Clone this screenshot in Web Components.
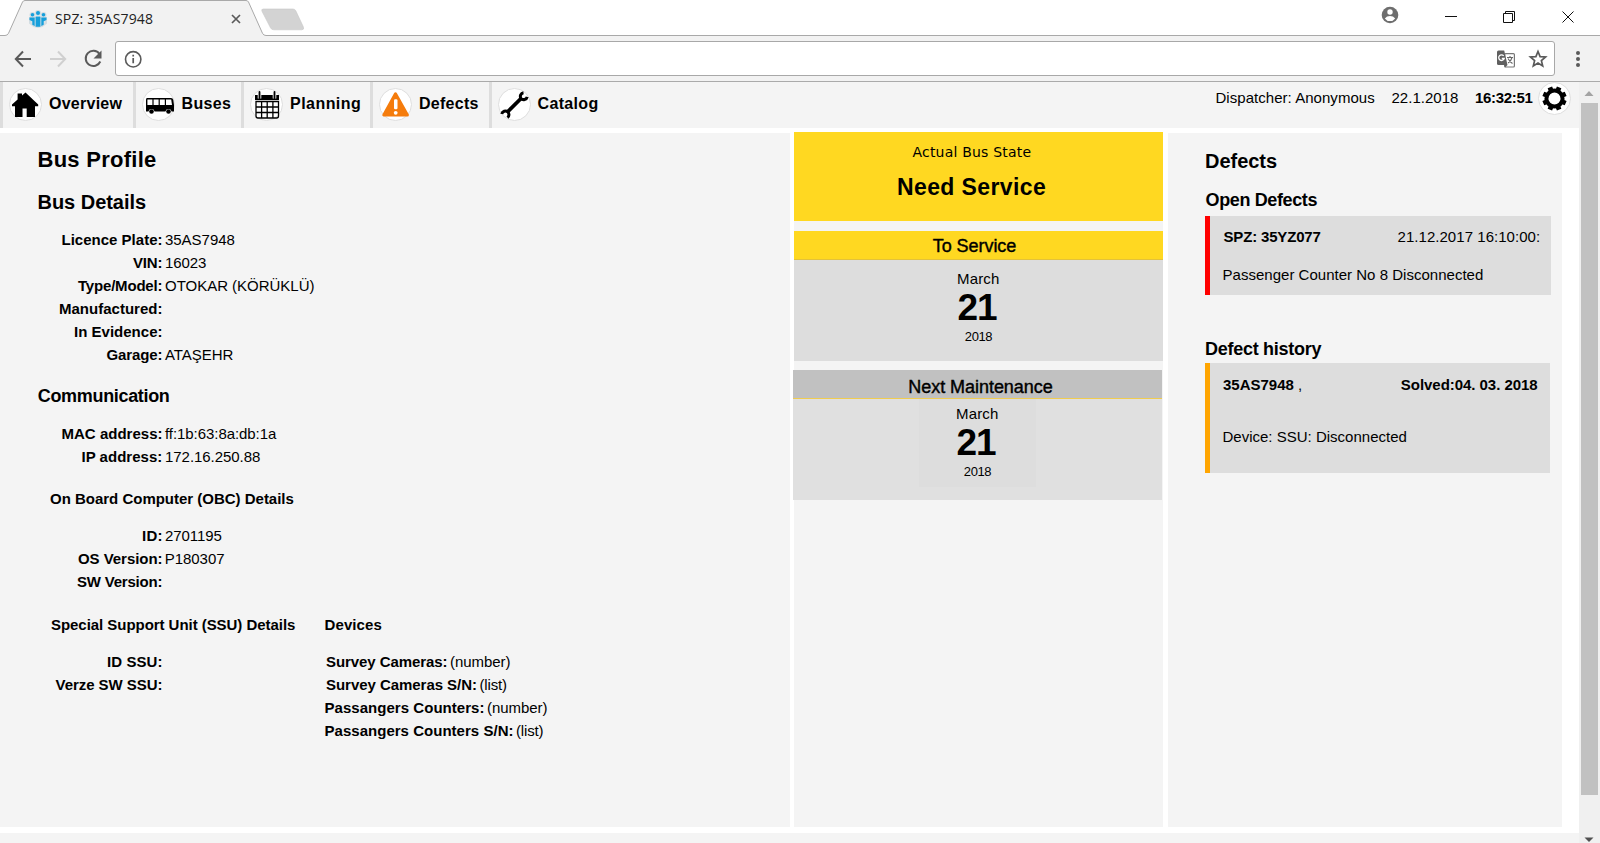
<!DOCTYPE html>
<html lang="en">
<head>
<meta charset="utf-8">
<title>SPZ: 35AS7948</title>
<style>
body{margin:0;width:1600px;height:843px;overflow:hidden;background:#fff;color:#000;font:15px/23px "Liberation Sans",Arial,sans-serif}
</style>
</head>
<body>
<bus-app></bus-app>
<script>
const define = (name, html, setup) => {
  const tpl = document.createElement('template');
  tpl.innerHTML = html;
  customElements.define(name, class extends HTMLElement {
    connectedCallback() {
      if (this.shadowRoot) return;
      const get = a => this.getAttribute(a) || '';
      this.attachShadow({mode: 'open'}).append(tpl.content.cloneNode(true));
      if (setup) setup(this, this.shadowRoot, get);
    }
  });
};

/* Text tracked so that its ink fills the width given in "w". */
const pen = document.createElement('canvas').getContext('2d');
define('fit-text', `<style>
:host{display:inline-block;white-space:pre;flex:none}
span{display:block}
</style><span><slot></slot></span>`, (el, root, get) => {
  const cs = getComputedStyle(el), text = el.textContent, span = root.querySelector('span');
  pen.font = `${cs.fontWeight} ${cs.fontSize} ${cs.fontFamily}`;
  const m = pen.measureText(text), w = parseFloat(get('w'));
  const ink = m.actualBoundingBoxLeft + m.actualBoundingBoxRight;
  el.style.width = w + 'px';
  if (text.length > 1) span.style.letterSpacing = ((w - ink) / (text.length - 1)).toFixed(3) + 'px';
  span.style.marginLeft = m.actualBoundingBoxLeft.toFixed(2) + 'px';
});

const ICONS = {
  home: '<path d="M16.500 4.500 13 7.600V5.400H8.600v6L3 16.600v1.600h3V29h7.500v-8.600h4.200V29H26V18.200h3.200v-1.600Z"/>',
  bus: '<path fill-rule="evenodd" d="M5 10h24q2 0 2.300 2l.7 5v6.500h-2.400a3.200 3.200 0 0 0-6.200 0H12.600a3.200 3.200 0 0 0-6.200 0H4V12q0-2 1-2ZM5.400 11.600V17h5v-5.400ZM11.600 11.600V17h5v-5.400ZM17.800 11.600V17h5v-5.400ZM24 11.600V17h6l-.8-5.400Z"/><circle cx="9.500" cy="23.500" r="2.300"/><circle cx="26.500" cy="23.500" r="2.300"/>',
  calendar: '<path d="M5 7h24v5H5Z"/><path d="M9.500 4.500v6M24.500 4.500v6" stroke="#f8f8f8" stroke-width="3.600"/><path d="M9.500 4v6M24.500 4v6" stroke="#000" stroke-width="1.800" stroke-linecap="round"/><path fill="none" stroke="#000" stroke-width="1.300" d="M6 13.500h22.500V28q0 2-2 2H8q-2 0-2-2ZM6 19h22.500M6 24.500h22.500M11.600 13.500V30M17.200 13.500V30M22.900 13.500V30"/>',
  warn: '<path fill="#f57c0c" stroke="#f57c0c" stroke-width="3" stroke-linejoin="round" d="M16.500 5.800 4.800 27h23.600Z"/><rect x="15" y="11.300" width="3.500" height="10" rx="1.200" fill="#fff"/><circle cx="16.700" cy="24.800" r="1.900" fill="#fff"/>',
  wrench: '<path stroke="#000" stroke-width="3.800" d="M9 24.500 23.500 10"/><path fill="none" stroke="#000" stroke-width="3" d="M25.500 4.800a3.600 3.600 0 0 0-2.500 5.600 3.600 3.600 0 0 0 6.200-1.600M9.500 29.600a3.700 3.700 0 0 0 .3-5.600 3.600 3.600 0 0 0-6 2"/>',
  gear: '<g transform="rotate(22.500 16.500 16.500)"><circle cx="16.500" cy="16.500" r="8" fill="none" stroke="#000" stroke-width="4"/><path id="t" d="M16.500 4.400v3.800M16.500 24.800v3.800M4.400 16.500h3.800M24.800 16.500h3.800" stroke="#000" stroke-width="4.800"/><path d="M16.500 4.400v3.800M16.500 24.800v3.800M4.400 16.500h3.800M24.800 16.500h3.800" stroke="#000" stroke-width="4.800" transform="rotate(45 16.500 16.500)"/></g>'
};
define('round-icon', `<style>
:host{display:block;flex:none;width:33px;height:33px}
svg{display:block}
</style><svg width="33" height="33" viewBox="0 0 33 33"><circle cx="16.500" cy="16.500" r="16" fill="#fff" stroke="#dedede"/><g></g></svg>`,
(el, root, get) => { root.querySelector('g').innerHTML = ICONS[get('name')]; });

define('nav-item', `<style>
:host{display:flex;box-sizing:border-box;height:46px;border-left:3px solid #ddd;padding:6px 0 0 var(--pad,6px);font:bold 16px/24px "Liberation Sans",Arial,sans-serif}
div{padding:4px 0 0 7px}
</style><slot name="icon"></slot><div><slot></slot></div>`);

define('info-row', `<style>
:host{display:flex;height:23px;gap:3.500px}
.l{font-weight:bold;display:flex;justify-content:flex-end;width:var(--label,161.500px)}
</style><div class="l"><slot name="label"></slot></div><slot></slot>`);

define('chrome-tabs', `<style>
:host{display:block;height:36px;position:relative;background:#fff}
svg{display:block}
.t{position:absolute;left:55px;top:7px;font:14px/23px "Open Sans","Noto Sans",sans-serif;color:#222}
</style>
<svg width="1600" height="36" viewBox="0 0 1600 36">
<path d="M0 36v-.500h5q2.500 0 3.500-2.200L22.500 2q.8-1.500 2.500-1.500h221q1.700 0 2.500 1.500l14 31.300q1 2.200 3.500 2.200h1334v.500Z" fill="#f2f2f2"/>
<path d="M0 35.500h5q2.500 0 3.500-2.200L22.500 2q.8-1.500 2.500-1.500h221q1.700 0 2.500 1.500l14 31.300q1 2.200 3.500 2.200h1334" fill="none" stroke="#a9a9a9"/>
<path d="M263.500 9h29.500q2 0 2.800 1.800l7.500 16q1.200 3-1.500 3h-28q-2.300 0-3.300-2l-8.500-16.500q-1-2.300 1.500-2.300Z" fill="#d3d3d3" stroke="#c8c8c8" stroke-width=".6"/>
<g fill="#d9e3e8" stroke="#d3dde2" stroke-width="2"><circle cx="38" cy="13" r="2"/><circle cx="32.500" cy="15" r="2"/><circle cx="43.500" cy="15" r="2"/><path d="M30 18h16v5l-4 3-4 1-4-1-4-3Z"/></g>
<g fill="#169fdb"><circle cx="38" cy="13" r="2"/><circle cx="32.500" cy="14.800" r="1.800"/><circle cx="43.500" cy="14.800" r="1.800"/><path d="M35.600 16.500h4.800v10.300h-4.800ZM29.500 17.500h5.200v8.400l-2.400-1.200v-3.500l-2.800-1.200ZM46.500 17.500h-5.200v8.400l2.400-1.200v-3.500l2.800-1.200Z"/></g>
<path d="m232 15 8 8m0-8-8 8" stroke="#5a5a5a" stroke-width="1.700"/>
<circle cx="1390" cy="15" r="8.300" fill="#6e6e6e"/><circle cx="1390" cy="12" r="2.700" fill="#fff"/><path d="M1384.800 18.400q2-2.400 5.200-2.400t5.200 2.400q-2 2.700-5.200 2.700t-5.200-2.700Z" fill="#fff"/>
<g fill="none" stroke="#111" stroke-width="1"><path d="M1445 16.500h12M1562.500 11.500l11 11m0-11-11 11"/><path d="M1503.500 13.500h9v9h-9ZM1505.500 13.500v-2h9v9h-2"/></g>
</svg>
<fit-text class="t" w="98">SPZ: 35AS7948</fit-text>`);

define('chrome-bar', `<style>
:host{display:flex;box-sizing:border-box;height:46px;background:#f2f2f2;border-bottom:1px solid #aaa;padding-top:5px}
.a{flex:none;width:115px;height:36px}
.f{box-sizing:border-box;width:1440px;height:35px;border:1px solid #a8a8a8;border-radius:3px;background:#fff;display:flex;justify-content:space-between}
svg{display:block}
</style>
<svg class="a" viewBox="0 41 115 36"><g fill="none" stroke="#5a5a5a" stroke-width="2"><path d="M31 59H16M23 51.500 15.800 59l7.200 7.500"/><path stroke="#d0d0d0" d="M50 59h15M58 51.500l7.200 7.500-7.200 7.500"/><path d="M99.500 54a7.600 7.600 0 1 0 .8 7.500"/></g><path d="M101.500 50.500v8h-8Z" fill="#5a5a5a"/></svg>
<div class="f">
<svg width="40" height="33" viewBox="116 42 40 33"><circle cx="133.200" cy="59.300" r="7.700" fill="none" stroke="#5a5a5a" stroke-width="1.600"/><path d="M133.200 58v5.200M133.200 54.800v1.700" stroke="#5a5a5a" stroke-width="1.700"/></svg>
<svg width="60" height="33" viewBox="1494 42 60 33"><rect x="1504.600" y="53.600" width="9.800" height="13.400" rx="1" fill="#fff" stroke="#777" stroke-width="1.200"/><path d="M1498.500 50.500h5.700l3.300 14.500h-9q-1.500 0-1.500-1.500V52q0-1.500 1.500-1.500Z" fill="#5f5f5f"/><path d="m1507.500 65-2.500 2.500-.5-2.500Z" fill="#5f5f5f"/><path d="M1503.700 55.900a2.800 2.800 0 1 0 .5 2.600h-2.400" fill="none" stroke="#fff" stroke-width="1.300"/><path d="M1507 57.500h6M1510 56v1.500M1512 57.500q-1 4-4 5.500M1508 58.500q1.500 3 4.500 5" fill="none" stroke="#666" stroke-width="1.100"/>
<path d="m1538 51.500 2.100 5.100 5.500.4-4.200 3.600 1.300 5.400-4.700-2.900-4.700 2.900 1.300-5.400-4.200-3.600 5.500-.4Z" fill="none" stroke="#5a5a5a" stroke-width="1.700"/></svg>
</div>
<svg width="45" height="36" viewBox="1555 41 45 36" fill="#5a5a5a"><circle cx="1578" cy="53" r="2"/><circle cx="1578" cy="59" r="2"/><circle cx="1578" cy="65" r="2"/></svg>`);

define('scroll-rail', `<style>
:host{display:flex;flex-direction:column;align-items:center;width:21px;height:761px;background:#f0f0f0}
div{width:17px;height:692px;background:#c1c1c1}
svg{display:block}
</style>
<svg width="21" height="21"><path d="M5.500 14h9L10 9Z" fill="#a3a3a3"/></svg><div></div>
<svg width="21" height="48"><path d="M5.500 42.500h9L10 47Z" fill="#505050"/></svg>`);

define('top-nav', `<style>
:host{display:flex;height:46px;background:#f4f4f4;width:1579px}
.s{margin-left:auto;display:flex;line-height:24px}
.s fit-text{margin-top:4px}
b{display:flex}
</style>
<nav-item style="width:133px"><round-icon slot="icon" name="home"></round-icon><fit-text w="73.500">Overview</fit-text></nav-item>
<nav-item style="width:108px;--pad:5.500px"><round-icon slot="icon" name="bus"></round-icon><fit-text w="48.500" style="margin-left:1px">Buses</fit-text></nav-item>
<nav-item style="width:129px"><round-icon slot="icon" name="calendar"></round-icon><fit-text w="69" style="margin-left:1px">Planning</fit-text></nav-item>
<nav-item style="width:119px"><round-icon slot="icon" name="warn"></round-icon><fit-text w="58.500" style="margin-left:1px">Defects</fit-text></nav-item>
<nav-item style="width:140px;--pad:5.500px"><round-icon slot="icon" name="wrench"></round-icon><fit-text w="60">Catalog</fit-text></nav-item>
<div class="s"><fit-text w="158.500">Dispatcher: Anonymous</fit-text>
<fit-text w="66.500" style="margin-left:16.500px">22.1.2018</fit-text>
<b><fit-text w="57.500" style="margin-left:17px">16:32:51</fit-text></b>
<round-icon name="gear" style="margin:0 8px 0 5.500px"></round-icon></div>`);

define('bus-profile', `<style>
:host{display:block;width:790px;height:694px;background:#f4f4f4;box-sizing:border-box;padding-top:14px}
h1,h2,h3,h4{margin:0 0 0 38.500px;height:24px;line-height:24px;font-size:20px}
h1{font-size:22px;height:25px;line-height:25px}
h2{margin-top:18px}
h3{font-size:18px;margin:18px 0 0 37.800px}
h4{font-size:15px;height:23px;line-height:23px;margin:19px 0 0 50px}
section{padding-top:14px}
.two{display:flex;padding-top:20px}
.two h4{margin-top:0}
.two>div{width:325.500px}
.dev info-row{--label:auto}
</style>
<h1><fit-text w="117.500">Bus Profile</fit-text></h1>
<h2><fit-text w="107.500">Bus Details</fit-text></h2>
<section>
<info-row><fit-text slot="label" w="99">Licence Plate:</fit-text><fit-text w="69.500">35AS7948</fit-text></info-row>
<info-row><fit-text slot="label" w="28.500">VIN:</fit-text><fit-text w="40" style="margin-left:1px">16023</fit-text></info-row>
<info-row><fit-text slot="label" w="83.500">Type/Model:</fit-text><fit-text w="149.500">OTOKAR (KÖRÜKLÜ)</fit-text></info-row>
<info-row><fit-text slot="label" w="101.500">Manufactured:</fit-text></info-row>
<info-row><fit-text slot="label" w="86.500">In Evidence:</fit-text></info-row>
<info-row><fit-text slot="label" w="55">Garage:</fit-text><fit-text w="68.500">ATAŞEHR</fit-text></info-row>
</section>
<h3><fit-text w="131">Communication</fit-text></h3>
<section>
<info-row><fit-text slot="label" w="99">MAC address:</fit-text><fit-text w="112">ff:1b:63:8a:db:1a</fit-text></info-row>
<info-row><fit-text slot="label" w="79">IP address:</fit-text><fit-text w="94" style="margin-left:1px">172.16.250.88</fit-text></info-row>
</section>
<h4><fit-text w="243.500">On Board Computer (OBC) Details</fit-text></h4>
<section>
<info-row><fit-text slot="label" w="18.500">ID:</fit-text><fit-text w="56.500">2701195</fit-text></info-row>
<info-row><fit-text slot="label" w="83.500">OS Version:</fit-text><fit-text w="58.500" style="margin-left:.700px">P180307</fit-text></info-row>
<info-row><fit-text slot="label" w="84.500">SW Version:</fit-text></info-row>
</section>
<div class="two">
<div><h4 style="margin-left:51px"><fit-text w="244">Special Support Unit (SSU) Details</fit-text></h4>
<section>
<info-row><fit-text slot="label" w="53.500">ID SSU:</fit-text></info-row>
<info-row><fit-text slot="label" w="106">Verze SW SSU:</fit-text></info-row>
</section></div>
<div class="dev"><h4 style="margin-left:0"><fit-text w="56">Devices</fit-text></h4>
<section>
<info-row><fit-text slot="label" w="120.500" style="margin-left:.500px">Survey Cameras:</fit-text><fit-text w="60.500">(number)</fit-text></info-row>
<info-row><fit-text slot="label" w="150" style="margin-left:.500px">Survey Cameras S/N:</fit-text><fit-text w="27.500">(list)</fit-text></info-row>
<info-row><fit-text slot="label" w="158">Passangers Counters:</fit-text><fit-text w="60.500">(number)</fit-text></info-row>
<info-row><fit-text slot="label" w="187">Passangers Counters S/N:</fit-text><fit-text w="27.500">(list)</fit-text></info-row>
</section></div>
</div>`);

define('date-card', `<style>
:host{display:block;width:369px;text-align:center}
.h{height:28px;background:var(--bar,#ffd821);border-bottom:1px solid var(--line,#e3c23a);font-size:18px;line-height:24px;-webkit-text-stroke:.4px #000}
.b{height:var(--bh,101px);background:var(--body,#ddd);display:flex;flex-direction:column;align-items:center}
.i{width:117px;height:88px;background:#ddd;display:flex;flex-direction:column;align-items:center;padding-top:var(--top,7px);box-sizing:border-box}
.d{font:bold 37px/36px "Liberation Sans",Arial,sans-serif;margin-right:2px}
.y{font-size:13px;line-height:21px}
</style>
<div class="h"><slot></slot></div>
<div class="b"><div class="i"><fit-text w="41">March</fit-text><fit-text class="d" w="38.500">21</fit-text><fit-text class="y" w="27.500">2018</fit-text></div></div>`);

define('state-column', `<style>
:host{display:block;width:369px;height:694px;background:#f4f4f4}
.s{height:88.500px;margin-top:-1px;background:#ffd821;text-align:center;box-sizing:border-box;padding:9px 14px 0 0}
.s fit-text{display:block;margin:0 auto}
.a{font:14px/23px "DejaVu Sans",Verdana,sans-serif}
.n{font-weight:bold;font-size:23px;line-height:28px}
</style>
<div class="s"><fit-text class="a" w="118">Actual Bus State</fit-text><fit-text class="n" w="147" style="margin-top:9px">Need Service</fit-text></div>
<date-card style="margin-top:10.500px"><fit-text w="83.500" style="margin:3px 8px 0 0">To Service</fit-text></date-card>
<date-card style="margin:9px 0 0 -1px;--bar:#c1c1c1;--line:#f0cc50;--body:#e0e0e0;--top:3px"><fit-text w="143.500" style="margin:5px 0 0 7px">Next Maintenance</fit-text></date-card>`);

define('defect-card', `<style>
:host{display:block;box-sizing:border-box;background:#ddd;border-left:5px solid var(--mark);padding:var(--top,9px) 12px 0 13.500px}
.r{display:flex;justify-content:space-between}
.m{display:flex;margin-top:var(--gap,15px)}
</style><div class="r"><slot name="id"></slot><slot name="when"></slot></div><div class="m"><slot></slot></div>`);

define('defects-panel', `<style>
:host{display:block;width:394px;height:694px;background:#f4f4f4;box-sizing:border-box;padding:16px 0 0 37px}
h2,h3{margin:0 0 0 1px;height:24px;line-height:24px;font-size:20px}
h3{font-size:18px;margin:15px 0 0 .500px}
.b{font-weight:bold}
</style>
<h2><fit-text w="71">Defects</fit-text></h2>
<h3><fit-text w="112">Open Defects</fit-text></h3>
<defect-card style="--mark:#f00;width:346px;height:79px;margin-top:4px">
<fit-text slot="id" class="b" w="97">SPZ: 35YZ077</fit-text><fit-text slot="when" w="141.500">21.12.2017 16:10:00:</fit-text>
<fit-text w="259.500">Passenger Counter No 8 Disconnected</fit-text></defect-card>
<h3 style="margin:42px 0 0 1px"><fit-text w="115.500">Defect history</fit-text></h3>
<defect-card style="--mark:#ffa500;--top:10px;--gap:29px;width:345px;height:110px;margin-top:2px">
<span slot="id" style="display:flex;gap:5.500px;margin-left:-.500px"><fit-text class="b" w="70.500">35AS7948</fit-text><fit-text w="2">,</fit-text></span><fit-text slot="when" class="b" w="136.500" style="margin-right:.700px">Solved:04. 03. 2018</fit-text>
<fit-text w="183">Device: SSU: Disconnected</fit-text></defect-card>`);

define('bus-app', `<style>
:host{display:block;width:1600px;height:843px;overflow:hidden}
.v{display:flex}
.p{width:1579px;height:761px;overflow:hidden}
.c{display:flex;margin-top:5px}
.c state-column{margin:0 5px 0 4px}
.f{height:10px;margin-top:6px;background:#f4f4f4}
</style>
<chrome-tabs></chrome-tabs><chrome-bar></chrome-bar>
<div class="v"><div class="p"><top-nav></top-nav>
<div class="c"><bus-profile></bus-profile><state-column></state-column><defects-panel></defects-panel></div>
<div class="f"></div></div><scroll-rail></scroll-rail></div>`);
</script>
</body>
</html></script>
